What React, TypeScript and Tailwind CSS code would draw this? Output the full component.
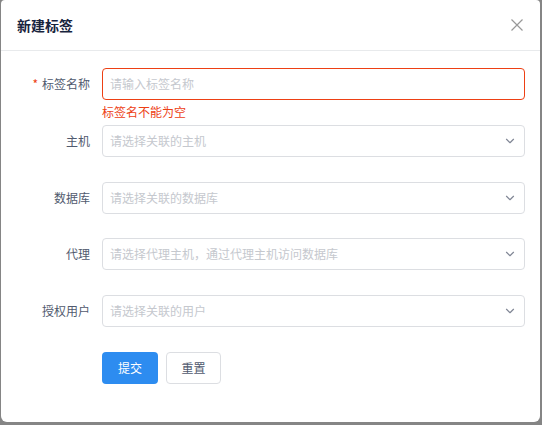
import { ChevronDown } from "lucide-react";

const fields = [
  { label: "主机", placeholder: "请选择关联的主机" },
  { label: "数据库", placeholder: "请选择关联的数据库" },
  { label: "代理", placeholder: "请选择代理主机，通过代理主机访问数据库" },
  { label: "授权用户", placeholder: "请选择关联的用户" },
];

const SelectRow = ({ label, placeholder }: { label: string; placeholder: string }) => {
  return (
    <div className="flex items-center h-[32px]">
      <label className="w-[85px] shrink-0 pr-[12px] text-right text-[12px] text-[#515a6e]">
        {label}
      </label>
      <div className="flex-1 h-[32px] flex items-center justify-between border border-[#dcdee2] rounded-[4px] pl-[7px] pr-[7px]">
        <span className="text-[12px] text-[#c5c8ce]">{placeholder}</span>
        <ChevronDown size={14} strokeWidth={2} className="text-[#808695]" />
      </div>
    </div>
  );
};

const App = () => {
  return (
    <div
      className="w-[542px] h-[425px] bg-[#858585] overflow-hidden"
      style={{ fontFamily: '"Noto Sans CJK SC", "Noto Sans", sans-serif' }}
    >
      <div className="ml-[1px] w-[539px] h-[422px] bg-white rounded-b-[6px] rounded-t-[4px] flex flex-col">
        <div className="h-[51px] shrink-0 flex items-center justify-between pl-[16px] pr-[17px] border-b border-[#e8eaec]">
          <h2 className="text-[14px] font-bold text-[#17233d] leading-[20px]">新建标签</h2>
          <svg width="12" height="12" viewBox="0 0 12 12">
            <path d="M0.5 0.5 L11.5 11.5 M11.5 0.5 L0.5 11.5" stroke="#999" strokeWidth="1.2" />
          </svg>
        </div>
        <div className="flex flex-col gap-[24.75px] pt-[17px] pl-[16px] pr-[15px]">
          <div className="relative flex items-center h-[32px]">
            <label className="w-[85px] shrink-0 pr-[12px] text-right text-[12px] text-[#515a6e]">
              <span className="text-[#ed4014] mr-[4px]">*</span>
              标签名称
            </label>
            <div className="flex-1 h-[32px] flex items-center border border-[#ed4014] rounded-[4px] px-[7px]">
              <span className="text-[12px] text-[#c5c8ce]">请输入标签名称</span>
            </div>
            <div className="absolute left-[85px] top-full pt-[6px] text-[12px] leading-none text-[#ed4014]">
              标签名不能为空
            </div>
          </div>
          {fields.map((f) => (
            <SelectRow key={f.label} label={f.label} placeholder={f.placeholder} />
          ))}
          <div className="flex gap-[8px] pl-[85px]">
            <button className="w-[56px] h-[32px] rounded-[4px] bg-[#2d8cf0] text-white text-[12px]">
              提交
            </button>
            <button className="w-[55px] h-[32px] rounded-[4px] border border-[#dcdee2] bg-white text-[#515a6e] text-[12px]">
              重置
            </button>
          </div>
        </div>
      </div>
    </div>
  );
};

export default App;
